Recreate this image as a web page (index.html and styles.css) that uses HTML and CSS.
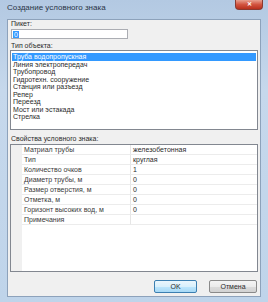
FILE: index.html
```html
<!DOCTYPE html>
<html lang="ru">
<head>
<meta charset="UTF-8">
<title>Создание условного знака</title>
<link rel="stylesheet" href="styles.css">
</head>
<body>
<div class="window">
    <div class="titlebar">
        <span class="title">Создание условного знака</span>
        <span class="close">&#x2715;</span>
    </div>
    <div class="client">
        <div class="label">Пикет:</div>
        <div class="textbox"><span class="sel">0</span></div>

        <div class="label gap">Тип объекта:</div>
        <ul class="listbox">
            <li class="active">Труба водопропускная</li>
            <li>Линия электропередач</li>
            <li>Трубопровод</li>
            <li>Гидротехн. сооружение</li>
            <li>Станция или разъезд</li>
            <li>Репер</li>
            <li>Переезд</li>
            <li>Мост или эстакада</li>
            <li>Стрелка</li>
        </ul>

        <div class="label gap-lg">Свойства условного знака:</div>
        <div class="grid">
            <div class="row"><span class="gutter"></span><span class="name">Матриал трубы</span><span class="value">железобетонная</span></div>
            <div class="row"><span class="gutter"></span><span class="name">Тип</span><span class="value">круглая</span></div>
            <div class="row"><span class="gutter"></span><span class="name">Количество очков</span><span class="value">1</span></div>
            <div class="row"><span class="gutter"></span><span class="name">Диаметр трубы, м</span><span class="value">0</span></div>
            <div class="row"><span class="gutter"></span><span class="name">Размер отверстия, м</span><span class="value">0</span></div>
            <div class="row"><span class="gutter"></span><span class="name">Отметка, м</span><span class="value">0</span></div>
            <div class="row"><span class="gutter"></span><span class="name">Горизонт высоких вод, м</span><span class="value">0</span></div>
            <div class="row"><span class="gutter"></span><span class="name">Примечания</span><span class="value"></span></div>
            <div class="rest"><span class="gutter"></span></div>
        </div>

        <div class="buttons">
            <button class="btn default">OK</button>
            <button class="btn">Отмена</button>
        </div>
    </div>
</div>
</body>
</html>
```

FILE: styles.css
```css
body {
    margin: 0;
    font-family: "Liberation Sans", Arial, sans-serif;
    font-size: 7px;
    color: #2b2b2b;
}

.window {
    width: 268px;
    height: 302px;
    box-sizing: border-box;
    padding: 0 7px 5px 7px;
    display: flex;
    flex-direction: column;
    background: linear-gradient(to bottom, #b3c9e2 0%, #c6d8ec 30%, #bfd4ea 100%);
}

.titlebar {
    height: 19px;
    display: flex;
    align-items: flex-start;
    margin-right: -2px;
}

.title {
    padding-top: 4px;
    font-size: 8px;
    color: #2a3546;
    line-height: 8px;
}

.close {
    margin-left: auto;
    width: 28px;
    height: 10px;
    box-sizing: border-box;
    border: 1px solid #8a3a30;
    border-top: none;
    border-radius: 0 0 4px 4px;
    background: linear-gradient(to bottom, #e8a08f 0%, #d2543f 50%, #b8301d 100%);
    color: #fff;
    font-size: 6px;
    line-height: 9px;
    text-align: center;
    font-weight: bold;
}

.client {
    flex: 1;
    display: flex;
    flex-direction: column;
    background-color: #f0f0f0;
    border: 1px solid #8da2bb;
    padding: 0 2px;
}

.label {
    line-height: 8px;
    height: 8px;
    padding-left: 1px;
}

.gap {
    margin-top: 3px;
}

.gap-lg {
    margin-top: 5px;
}

.textbox {
    width: 117px;
    height: 10px;
    box-sizing: border-box;
    margin-left: 1px;
    margin-top: 1px;
    background-color: #fff;
    border: 1px solid #abadb3;
    padding: 1px 0 0 1px;
}

.sel {
    display: inline-block;
    background-color: #3399ff;
    color: #fff;
    line-height: 7px;
    padding: 0 1px;
}

.listbox {
    list-style: none;
    margin: 0;
    height: 80px;
    box-sizing: border-box;
    padding: 2px 1px 0 1px;
    background-color: #fff;
    border: 1px solid #828790;
}

.listbox li {
    line-height: 7.5px;
    height: 7.5px;
    padding-left: 1px;
}

.listbox li.active {
    background-color: #3399ff;
    color: #fff;
}

.grid {
    height: 128px;
    box-sizing: border-box;
    margin-top: 1px;
    display: flex;
    flex-direction: column;
    background-color: #fff;
    border: 1px solid #828790;
}

.row {
    display: flex;
    height: 10px;
    line-height: 10px;
}

.gutter {
    width: 11px;
    flex-shrink: 0;
    background-color: #f0f0f0;
}

.name {
    width: 109px;
    padding-left: 2px;
    border-right: 1px solid #e6e6e6;
    border-bottom: 1px solid #ececec;
    box-sizing: border-box;
    color: #3a3a3a;
}

.value {
    flex: 1;
    padding-left: 2px;
    border-bottom: 1px solid #ececec;
    box-sizing: border-box;
}

.rest {
    flex: 1;
    display: flex;
}

.buttons {
    display: flex;
    justify-content: flex-end;
    gap: 12px;
    margin-top: 8px;
    padding-right: 1px;
}

.btn {
    height: 13px;
    width: 48px;
    padding: 0;
    font-family: "Liberation Sans", Arial, sans-serif;
    font-size: 7px;
    color: #2b2b2b;
    border: 1px solid #8a8a8a;
    border-radius: 2px;
    background: linear-gradient(to bottom, #f4f4f4 0%, #ebebeb 50%, #dcdcdc 51%, #d2d2d2 100%);
}

.btn.default {
    width: 43px;
    border-color: #3c7fb1;
    background: linear-gradient(to bottom, #eaf6fd 0%, #d9f0fc 50%, #bee6fd 51%, #a7d9f5 100%);
}
```
